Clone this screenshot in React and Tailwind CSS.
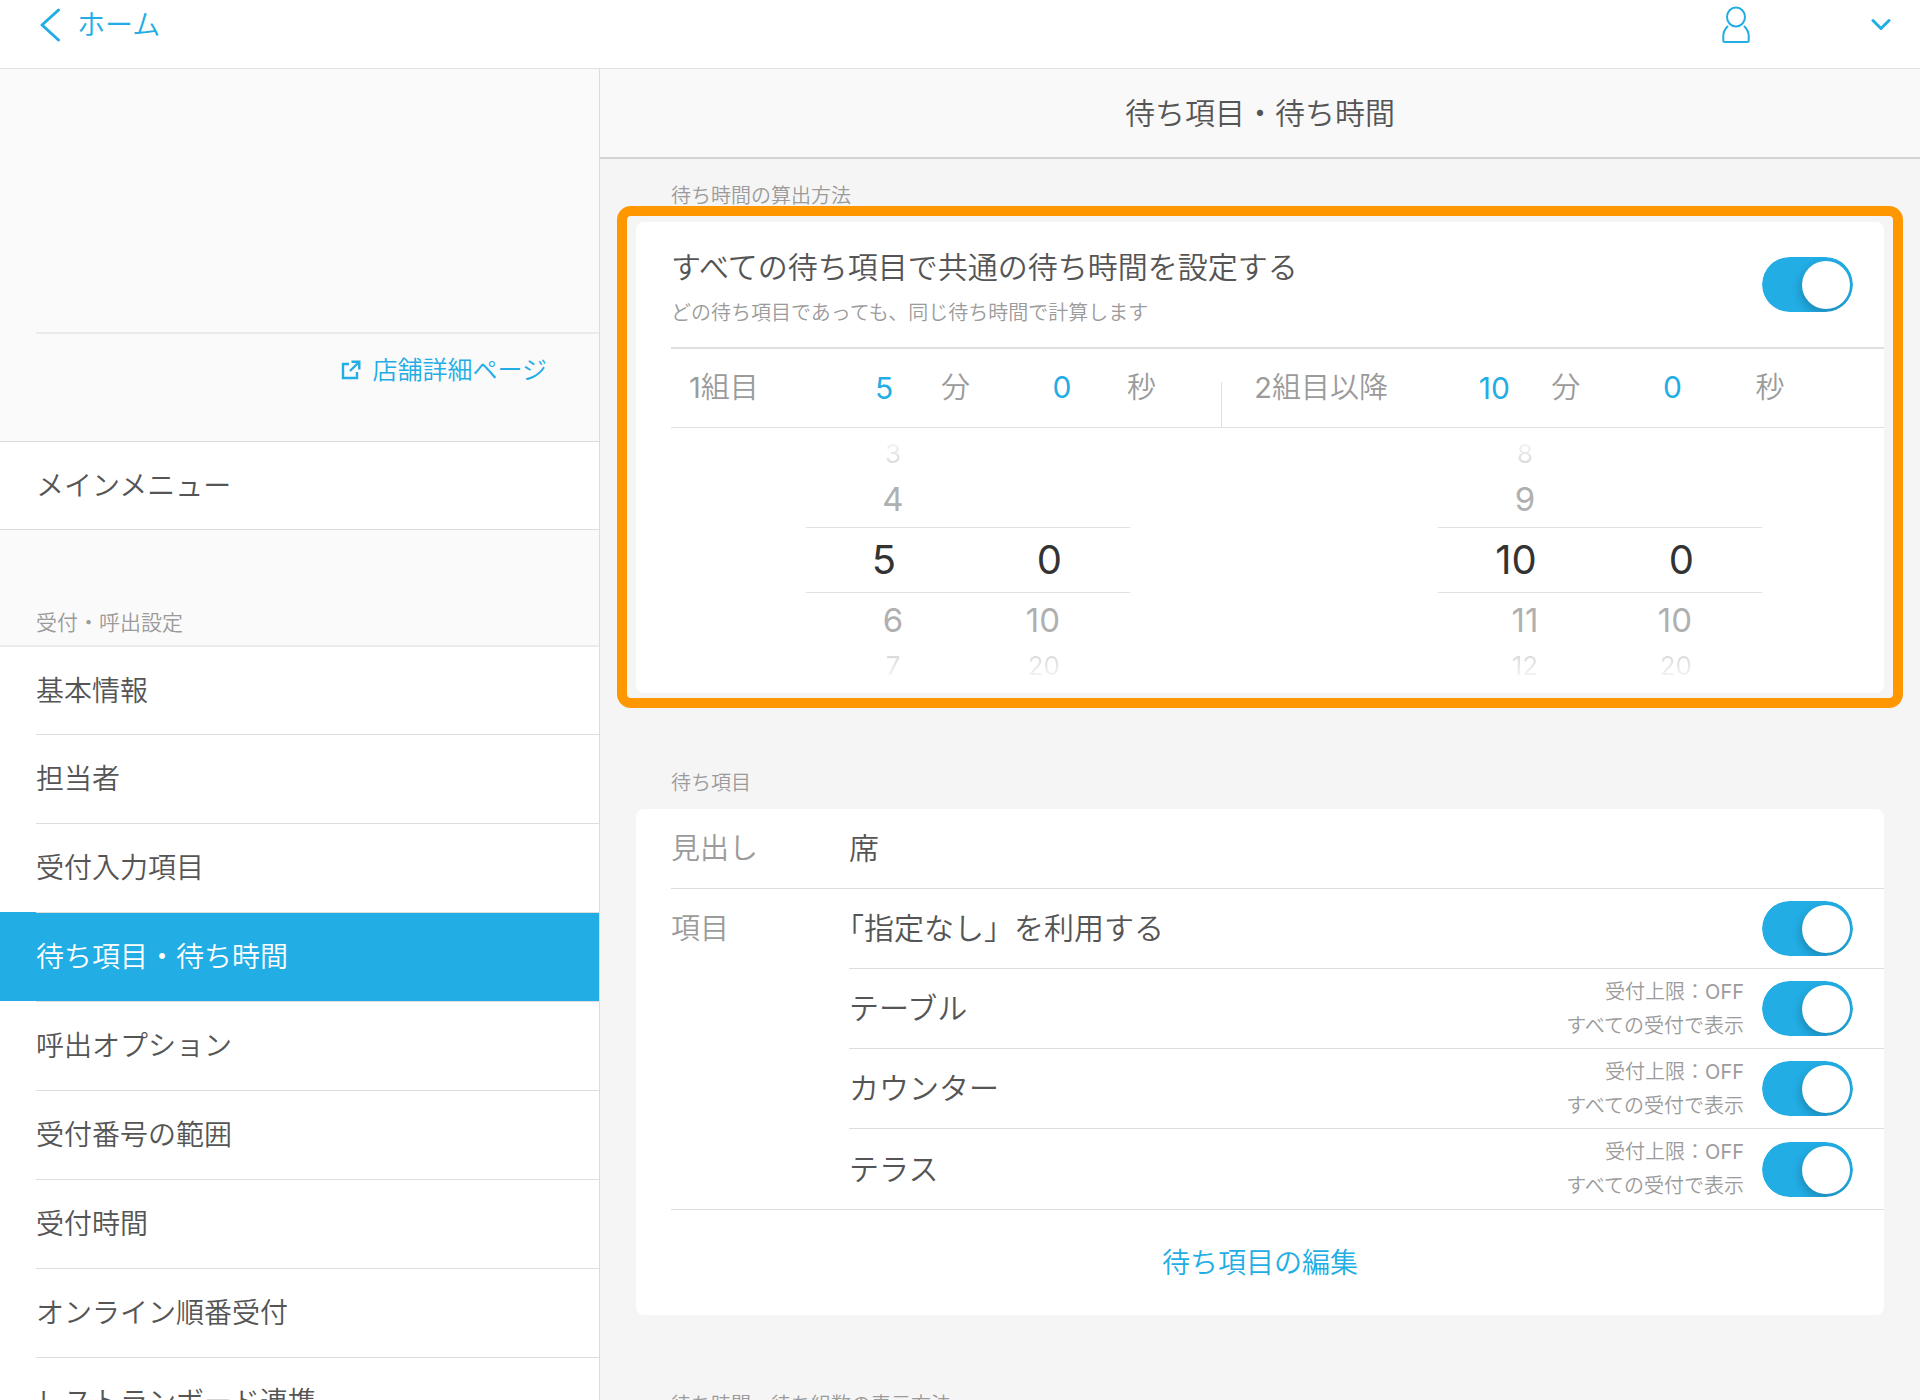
import React, { useState } from "react";

const MENU = [
  "基本情報",
  "担当者",
  "受付入力項目",
  "待ち項目・待ち時間",
  "呼出オプション",
  "受付番号の範囲",
  "受付時間",
  "オンライン順番受付",
  "レストランボード連携",
];
const SELECTED = "待ち項目・待ち時間";
const SEATS = ["テーブル", "カウンター", "テラス"];

function Toggle({ label }) {
  const [on, setOn] = useState(true);
  return (
    <label className="relative block h-[55px] w-[91px] shrink-0 cursor-pointer overflow-hidden rounded-full">
      <input
        type="checkbox"
        role="switch"
        aria-label={label}
        checked={on}
        onChange={(e) => setOn(e.target.checked)}
        className="peer absolute inset-0 m-0 h-full w-full cursor-pointer appearance-none rounded-full bg-[#dddddd] checked:bg-[#22ade5]"
      />
      <span className="pointer-events-none absolute top-1 left-1 h-12 w-12 rounded-full bg-white shadow-[-2px_4px_8px_rgba(0,0,0,0.2)] peer-checked:right-[3px] peer-checked:left-auto" />
    </label>
  );
}

function SectionLabel({ children }) {
  return <h2 className="mb-[11px] pl-[35px] text-[20px] leading-[30px] text-[#9b9b9b]">{children}</h2>;
}

function Value({ children, label }) {
  return (
    <button type="button" aria-label={label} className="w-[88px] text-center text-[30px] leading-10 font-normal text-[#22ade5]">
      {children}
    </button>
  );
}

function WheelRow({ minute, second, size }) {
  const far = "h-9 pr-0.5 text-[26px]";
  const near = "h-[55px] text-[33px] text-[#b0b0b0]";
  const current = "h-[66px] border-y border-[#e0e0e0] text-[40px] text-[#333333]";
  const isCurrent = size === "current";
  const ink =
    size === "top"
      ? "bg-linear-to-b from-[#fafafa] to-[#d4d4d4] bg-clip-text text-transparent"
      : size === "bottom"
        ? "bg-linear-to-b from-[#d4d4d4] to-[#fafafa] bg-clip-text text-transparent"
        : "";
  return (
    <div className={"flex items-center leading-none font-normal " + (isCurrent ? current : size === "near" ? near : far)}>
      <span className={isCurrent ? "w-[156px] text-center" : "w-[156px] pl-[18px] text-center"}>
        <span className={ink}>{minute}</span>
      </span>
      <span className={isCurrent ? "w-[100px] text-right" : "w-[98px] text-right"}>
        <span className={ink}>{second}</span>
      </span>
    </div>
  );
}

function Wheel({ minutes, label }) {
  return (
    <div role="group" aria-label={label} className="w-[324px] shrink-0">
      <WheelRow size="top" minute={minutes[0]} />
      <WheelRow size="near" minute={minutes[1]} />
      <WheelRow size="current" minute={minutes[2]} second="0" />
      <WheelRow size="near" minute={minutes[3]} second="10" />
      <WheelRow size="bottom" minute={minutes[4]} second="20" />
    </div>
  );
}

export default function App() {
  return (
    <div className="flex h-screen flex-col overflow-hidden bg-white font-['Inter','Noto_Sans_CJK_JP',sans-serif] font-[350] text-[#555555]">
      <header className="flex h-[69px] shrink-0 items-start justify-between border-b border-[#e2e2e2] pr-[29px] pl-10">
        <a href="#home" className="flex h-[50px] items-center gap-[17px] text-[28px] leading-none text-[#22ade5]">
          <svg width="20" height="34" viewBox="0 0 20 34" fill="none" stroke="currentColor" strokeWidth="3" strokeLinecap="round" strokeLinejoin="round">
            <path d="M18.5 2 2 17l16.500 15" />
          </svg>
          ホーム
        </a>
        <button type="button" aria-label="アカウント" className="flex h-[50px] items-center gap-[121px] text-[#22ade5]">
          <svg width="28" height="38" viewBox="0 0 28 38" fill="none" stroke="currentColor" strokeWidth="2" strokeLinecap="round" strokeLinejoin="round">
            <ellipse cx="14" cy="11" rx="9" ry="9.500" />
            <path d="M5.500 20.500C2.500 23.500 1.300 26.500 1.300 30v4.500q0 1.500 1.500 1.500h22.400q1.500 0 1.500-1.500V30c0-3.500-1.200-6.500-4.200-9.500" />
          </svg>
          <svg width="20" height="14" viewBox="0 0 20 14" fill="none" stroke="currentColor" strokeWidth="3" strokeLinecap="round" strokeLinejoin="round">
            <path d="m2 2.500 8 8 8-8" />
          </svg>
        </button>
      </header>

      <div className="flex min-h-0 flex-1">
        <aside className="w-[600px] shrink-0 overflow-hidden border-r border-[#dcdcdc] bg-[#fafafa]">
          <div className="ml-9 h-[265px] border-b-2 border-[#ebebeb]" />
          <div className="flex h-[107px] justify-end pr-[52px]">
            <a href="#shop" className="flex h-[72px] items-center gap-[11px] text-[25px] leading-none text-[#22ade5]">
              <svg width="20" height="20" viewBox="0 0 20 20" fill="none" stroke="currentColor" strokeWidth="2.400">
                <path d="M8 4H2v14h14v-6" />
                <path d="M10.500 1.700h7.800v7.800M18 2 9 11" />
              </svg>
              店舗詳細ページ
            </a>
          </div>
          <nav>
            <a href="#main" className="flex h-[89px] items-center border-y border-[#dcdcdc] bg-white pl-9 text-[28px] leading-none">
              メインメニュー
            </a>
            <h2 className="flex h-[117px] items-end border-b-2 border-[#ebebeb] pb-2.5 pl-9 text-[21px] leading-6 text-[#9b9b9b]">
              受付・呼出設定
            </h2>
            <ul>
              {MENU.map((item, i) => (
                <li key={item} className={item === SELECTED ? "bg-[#22ade5] pl-9 text-white" : "bg-white pl-9"}>
                  <a
                    href="#menu"
                    aria-current={item === SELECTED ? "page" : undefined}
                    className={
                      "flex items-center text-[28px] leading-none whitespace-nowrap " +
                      (i === 0 ? "h-[87px]" : "h-[89px] border-t border-[#dedede]")
                    }
                  >
                    {item}
                  </a>
                </li>
              ))}
            </ul>
          </nav>
        </aside>

        <main className="min-w-0 flex-1 overflow-hidden bg-[#f5f5f5]">
          <h1 className="flex h-[90px] items-center justify-center border-b-2 border-[#d4d4d4] bg-[#f9f9f9] text-[30px] leading-none">
            待ち項目・待ち時間
          </h1>

          <div className="px-9 pt-[22px]">
            <section>
              <SectionLabel>待ち時間の算出方法</SectionLabel>
              <div className="relative rounded-lg bg-white pb-[9px]">
                <div className="pointer-events-none absolute -inset-x-[19px] -top-4 -bottom-[15px] rounded-[14px] border-[10px] border-[#ff9800]" />
                <div className="ml-[35px] flex h-[127px] items-center justify-between border-b-2 border-[#e0e0e0] pr-[31px]">
                  <div className="pt-1.5">
                    <p className="text-[30px] leading-[50px]">すべての待ち項目で共通の待ち時間を設定する</p>
                    <p className="text-[20px] leading-[42px] text-[#9b9b9b]">どの待ち項目であっても、同じ待ち時間で計算します</p>
                  </div>
                  <Toggle label="すべての待ち項目で共通の待ち時間を設定する" />
                </div>

                <div className="ml-[35px] flex h-[79px] items-end border-b border-[#e0e0e0] text-[29px] text-[#9b9b9b]">
                  <div className="flex h-[78px] w-5/11 items-end justify-end">
                    <div className="flex h-full flex-1 items-center pl-[18px]">
                      <span className="w-[151px]">
                        <span className="font-normal">1</span>組目
                      </span>
                      <Value label="1組目 分">5</Value>
                      <span className="ml-[13px]">分</span>
                      <span className="ml-12">
                        <Value label="1組目 秒">0</Value>
                      </span>
                      <span className="ml-[21px]">秒</span>
                    </div>
                    <div className="h-[45px] w-px bg-[#e0e0e0]" />
                  </div>
                  <div className="flex h-[78px] flex-1 items-center pl-8">
                    <span className="w-[196px]">
                      <span className="font-normal">2</span>組目以降
                    </span>
                    <Value label="2組目以降 分">10</Value>
                    <span className="ml-[13px]">分</span>
                    <span className="ml-12">
                      <Value label="2組目以降 秒">0</Value>
                    </span>
                    <span className="ml-[39px]">秒</span>
                  </div>
                </div>

                <div className="flex justify-between pt-2 pr-[122px] pl-[170px]">
                  <Wheel label="1組目" minutes={["3", "4", "5", "6", "7"]} />
                  <Wheel label="2組目以降" minutes={["8", "9", "10", "11", "12"]} />
                </div>
              </div>
            </section>

            <section className="mt-[75px]">
              <SectionLabel>待ち項目</SectionLabel>
              <div className="rounded-lg bg-white pl-[35px] text-[30px]">
                <div className="flex h-20 items-center border-b border-[#dedede]">
                  <span className="w-[178px] text-[29px] text-[#9b9b9b]">見出し</span>
                  <span>席</span>
                </div>
                <div className="flex border-b border-[#dedede]">
                  <div className="flex h-[79px] w-[178px] items-center text-[29px] text-[#9b9b9b]">項目</div>
                  <ul className="flex-1">
                    <li className="flex h-20 items-center justify-between border-b border-[#dedede] pr-[31px]">
                      <span className="[text-spacing-trim:trim-start]">「指定なし」を利用する</span>
                      <Toggle label="「指定なし」を利用する" />
                    </li>
                    {SEATS.map((seat) => (
                      <li key={seat} className="flex h-20 items-center border-b border-[#dedede] pr-[31px] last:border-b-0">
                        <span className="flex-1">{seat}</span>
                        <span className="mr-[18px] text-right text-[20px] leading-[34px] text-[#9b9b9b]">
                          受付上限：<span className="font-normal">OFF</span>
                          <br />
                          すべての受付で表示
                        </span>
                        <Toggle label={seat} />
                      </li>
                    ))}
                  </ul>
                </div>
                <button type="button" className="-ml-[35px] flex h-[105px] w-[calc(100%+35px)] items-center justify-center text-[28px] text-[#22ade5]">
                  待ち項目の編集
                </button>
              </div>
            </section>

            <section className="mt-[75px]">
              <SectionLabel>待ち時間・待ち組数の表示方法</SectionLabel>
            </section>
          </div>
        </main>
      </div>
    </div>
  );
}
